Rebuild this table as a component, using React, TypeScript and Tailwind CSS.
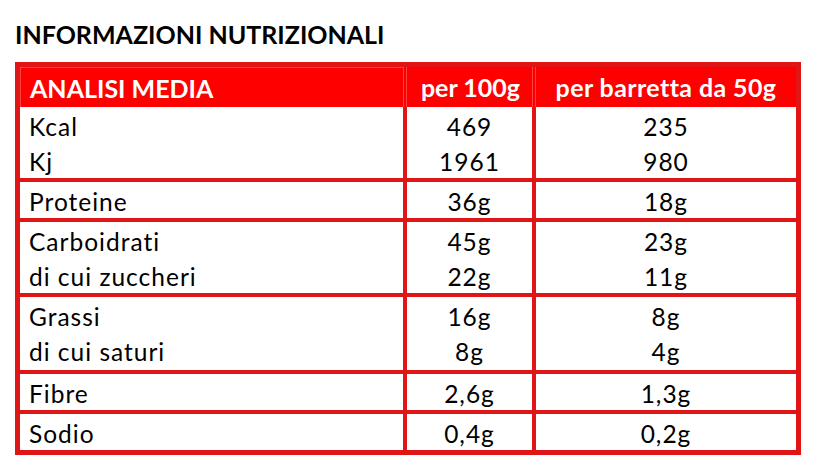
import React from "react";

type Row = { labels: string[]; a: string[]; b: string[]; h: string };

const rows: Row[] = [
  { labels: ["Kcal", "Kj"], a: ["469", "1961"], b: ["235", "980"], h: "h-[71px]" },
  { labels: ["Proteine"], a: ["36g"], b: ["18g"], h: "h-[36px]" },
  { labels: ["Carboidrati", "di cui zuccheri"], a: ["45g", "22g"], b: ["23g", "11g"], h: "h-[71px]" },
  { labels: ["Grassi", "di cui saturi"], a: ["16g", "8g"], b: ["8g", "4g"], h: "h-[73px]" },
  { labels: ["Fibre"], a: ["2,6g"], b: ["1,3g"], h: "h-[36px]" },
  { labels: ["Sodio"], a: ["0,4g"], b: ["0,2g"], h: "h-[36px]" },
];

function Lines({ items, center }: { items: string[]; center?: boolean }) {
  return (
    <div className={"pt-[2px] " + (center ? "text-center" : "pl-[9px]")}>
      {items.map((t, i) => (
        <div key={i} className="h-[35px] leading-[35px] whitespace-nowrap">
          {t}
        </div>
      ))}
    </div>
  );
}

export default function App() {
  return (
    <div
      className="w-[818px] h-[476px] bg-white pl-[15px] pt-[18px] text-black"
      style={{ fontFamily: "Lato, 'Open Sans', sans-serif" }}
    >
      <div className="text-[25px] leading-[32px] font-bold whitespace-nowrap">
        INFORMAZIONI NUTRIZIONALI
      </div>
      <div className="mt-[12px] w-[786px] border-[5px] border-[#e01616]">
        <div className="flex h-[40px] bg-[#ff0000] text-white font-bold text-[25px] leading-[40px]">
          <div className="w-[383px] pl-[9px] border-t border-l border-[#ff6b6b]/60">ANALISI MEDIA</div>
          <div className="w-[4px] border-x border-[#ff6b6b]/60" />
          <div className="w-[125px] pl-[2px] text-center">per 100g</div>
          <div className="w-[4px] border-x border-[#ff6b6b]/60" />
          <div className="w-[260px] text-center whitespace-nowrap tracking-[0.4px]">per barretta da 50g</div>
        </div>
        {rows.map((r, i) => (
          <div key={i}>
            {i > 0 && <div className="h-[4px] bg-[#e01616]" />}
            <div className={"flex overflow-hidden text-[24.5px] tracking-[1px] " + r.h}>
              <div className="w-[383px]">
                <Lines items={r.labels} />
              </div>
              <div className="w-[4px] bg-[#e01616]" />
              <div className="w-[125px]">
                <Lines items={r.a} center />
              </div>
              <div className="w-[4px] bg-[#e01616]" />
              <div className="w-[260px]">
                <Lines items={r.b} center />
              </div>
            </div>
          </div>
        ))}
      </div>
    </div>
  );
}
